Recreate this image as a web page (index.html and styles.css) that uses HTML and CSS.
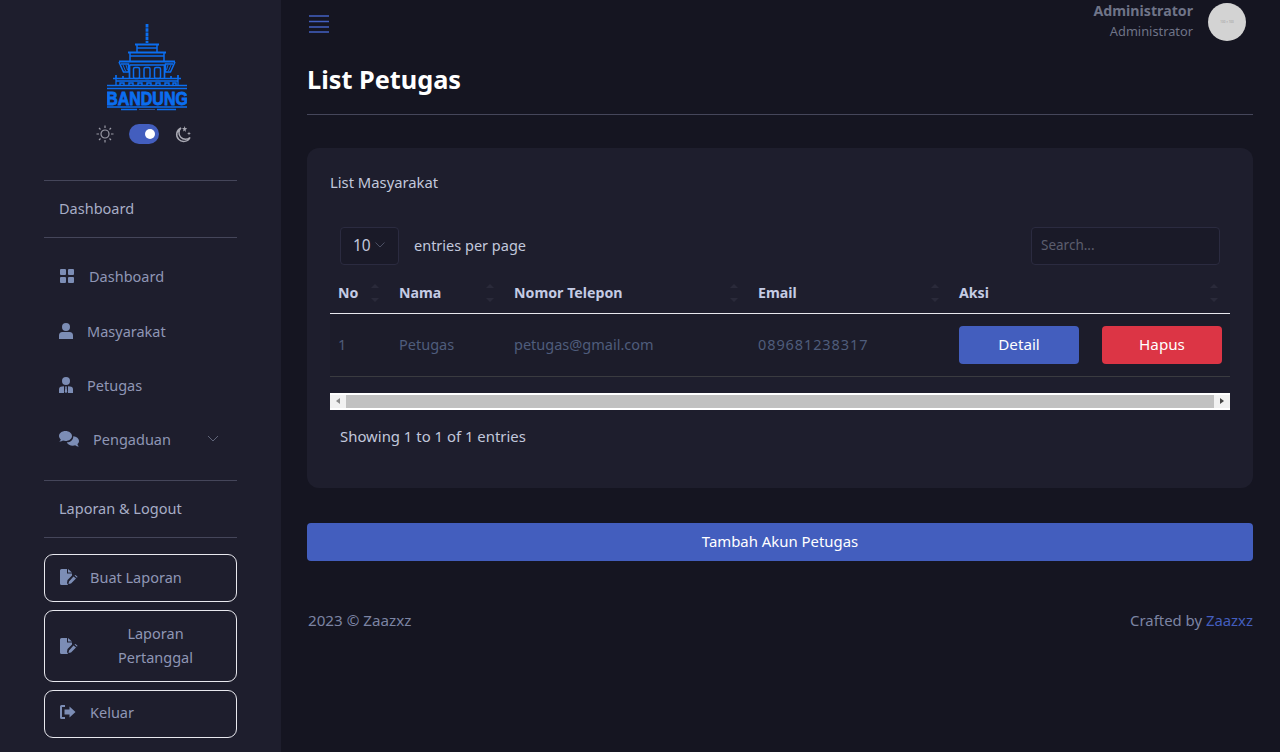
FILE: index.html
```html
<!DOCTYPE html>
<html lang="id">
<head>
<meta charset="utf-8">
<title>List Petugas</title>
<link rel="stylesheet" href="styles.css">
</head>
<body>
<div class="app">
  <aside class="sidebar">
    <div class="logo">
      <svg width="80" height="88" viewBox="0 0 80 88" fill="none" stroke="#0b6ef0" stroke-width="1.500">
        <path d="M40 0V19" stroke-width="2.800" stroke-dasharray="3.500 .7"/>
        <path d="M28 20.500H52" stroke-width="2"/>
        <path d="M30 21V28M50 21V28M30 24H50"/>
        <path d="M21 28.500H59" stroke-width="2"/>
        <path d="M23 29V37M57 29V37M23 32H57"/>
        <path d="M12 37.500H68" stroke-width="2"/>
        <path d="M12 38L16.500 48H21.500V40H14M68 38L63.500 48H58.500V40H66"/>
        <path d="M16 41L18.500 47M19 41L20.500 46M64 41L61.500 47M61 41L59.500 46" stroke-width=".9"/>
        <path d="M22.500 41H57.500V55M22.500 41V55" stroke-width="1.700"/>
        <rect x="26.500" y="43.500" width="6" height="11" rx="1.500"/>
        <rect x="37" y="43.500" width="6" height="11" rx="1.500"/>
        <rect x="47.500" y="43.500" width="6" height="11" rx="1.500"/>
        <path d="M6 54.500H74M9 51V54M71 51V54M16 52V54M64 52V54" stroke-width="1.700"/>
        <path d="M9 55V61M71 55V61M9 57H71" stroke-width="1.300"/>
        <path d="M13 61V59H17V61M22 61V59H26V61M31 61V59H35V61M40 61V59H44V61M49 61V59H53V61M58 61V59H62V61M66 61V59H69V61" stroke-width="1.400"/>
        <path d="M0 61.500H80M0 64.500H80" stroke-width="1.500"/>
        <path d="M0 83H80" stroke-width="1.600"/>
        <path d="M14 85.500H30M50 85.500H69" stroke-width="1.400"/>
        <path d="M32 85.500H48" stroke-width="1" stroke="#2c4f8e"/>
        <text x="40" y="81" class="logo-text" text-anchor="middle" transform="translate(0 -14) scale(1 1.172)">BANDUNG</text>
      </svg>
    </div>
    <div class="theme">
      <svg class="theme-icon" width="18" height="18" viewBox="0 0 18 18" fill="none" stroke="#9a9aa6" stroke-width="1.2">
        <circle cx="9" cy="9" r="4"/>
        <path d="M9 0.500V3M9 15V17.500M0.500 9H3M15 9H17.500M3 3L4.500 4.500M13.500 13.500L15 15M3 15L4.500 13.500M13.500 4.500L15 3"/>
      </svg>
      <span class="toggle"><span class="knob"></span></span>
      <svg class="theme-icon" width="18" height="18" viewBox="0 0 18 18" fill="none" stroke="#a9a9b3" stroke-width="1.5">
        <path d="M7 3A7 7 0 1 0 16 12.500A6.500 6.500 0 0 1 7 3Z"/>
        <path d="M10.500 1L11.300 3L13.300 3.500L11.500 4.800L12 7L10.500 5.500L9 6.500L9.600 4.600L8 3.300L10 3Z" fill="#a9a9b3" stroke="none"/>
        <path d="M15 6.500L15.500 8L17 8.500L15.500 9L15 10.500L14.500 9L13 8.500L14.500 8Z" fill="#a9a9b3" stroke="none"/>
      </svg>
    </div>

    <div class="side-heading first">Dashboard</div>
    <nav class="menu">
      <a class="menu-item gap-dash">
        <svg width="14" height="14" viewBox="0 0 14 14" fill="#7c8db5"><rect width="6" height="6" rx="1"/><rect x="8" width="6" height="6" rx="1"/><rect y="8" width="6" height="6" rx="1"/><rect x="8" y="8" width="6" height="6" rx="1"/></svg>
        <span>Dashboard</span>
      </a>
      <a class="menu-item">
        <svg width="14" height="16" viewBox="0 0 14 16" fill="#7c8db5"><circle cx="7" cy="4" r="4"/><path d="M3.500 9H10.500A3.500 3.500 0 0 1 14 12.500V16H0V12.500A3.500 3.500 0 0 1 3.500 9Z"/></svg>
        <span>Masyarakat</span>
      </a>
      <a class="menu-item">
        <svg width="14" height="16" viewBox="0 0 14 16" fill="#7c8db5"><circle cx="7" cy="4" r="4"/><path d="M3 9.500L5 9.200V16H0V12.500A3 3 0 0 1 3 9.500ZM11 9.500L9 9.200V16H14V12.500A3 3 0 0 0 11 9.500ZM6 9.500H8L7.700 11L8.300 15L7 16L5.700 15L6.300 11Z"/></svg>
        <span>Petugas</span>
      </a>
      <a class="menu-item chat">
        <svg width="20" height="16" viewBox="0 0 20 16" fill="#7c8db5"><path d="M6.500 0C10 0 13 2.200 13 5S10 10 6.500 10C5.500 10 4.700 9.800 3.900 9.500C3 10.200 1.800 10.700 .3 10.700C1.200 9.900 1.700 9 1.800 8.400C.7 7.500 0 6.300 0 5C0 2.200 2.900 0 6.500 0Z"/><path d="M14.300 5.200C17.500 5.500 20 7.500 20 10C20 11.200 19.400 12.300 18.400 13.100C18.500 13.900 19 14.800 19.800 15.600C18.400 15.500 17.100 15 16.200 14.300C15.500 14.600 14.700 14.700 13.800 14.700C11 14.700 8.600 13.300 7.800 11.300C11.300 11.200 14.400 9 14.300 5.200Z"/></svg>
        <span>Pengaduan</span>
        <svg class="chev" width="12" height="7" viewBox="0 0 12 7" fill="none" stroke="#5f6478" stroke-width="1"><path d="M1 1L6 6L11 1"/></svg>
      </a>
    </nav>
    <div class="side-heading second">Laporan &amp; Logout</div>
    <div class="side-buttons">
      <a class="side-btn">
        <svg width="18" height="16" viewBox="0 0 18 16" fill="#7c8db5"><path d="M0 1.500A1.500 1.500 0 0 1 1.500 0H7V4.500H12V6.500L7.500 11L7 14L8 16H1.500A1.500 1.500 0 0 1 0 14.500ZM8 0L12 3.500H8Z"/><path d="M13.500 7.500L16 9.500L11 14.500L8.500 15L9 12.500ZM14.500 6.500L15.500 6L17.500 7.800L17 8.800Z"/></svg>
        <span>Buat Laporan</span>
      </a>
      <a class="side-btn tall">
        <svg class="tall-icon" width="18" height="16" viewBox="0 0 18 16" fill="#7c8db5"><path d="M0 1.500A1.500 1.500 0 0 1 1.500 0H7V4.500H12V6.500L7.500 11L7 14L8 16H1.500A1.500 1.500 0 0 1 0 14.500ZM8 0L12 3.500H8Z"/><path d="M13.500 7.500L16 9.500L11 14.500L8.500 15L9 12.500ZM14.500 6.500L15.500 6L17.500 7.800L17 8.800Z"/></svg>
        <span class="btn-center">Laporan<br>Pertanggal</span>
      </a>
      <a class="side-btn last">
        <svg width="18" height="14" viewBox="0 0 18 14" fill="#7c8db5"><path d="M5 0V2H2V12H5V14H1.500A1.500 1.500 0 0 1 0 12.500V1.500A1.500 1.500 0 0 1 1.500 0Z"/><path d="M9.500 1.500L15.500 7L9.500 12.500V9.500H4.500V4.500H9.500Z"/></svg>
        <span>Keluar</span>
      </a>
    </div>
  </aside>

  <main class="main">
    <header class="topbar">
      <svg class="burger" width="20" height="18" viewBox="0 0 20 18" fill="none" stroke="#4360c2" stroke-width="1.500"><path d="M0 1H20M0 6.500H20M0 12H20M0 17H20"/></svg>
      <div class="user">
        <div class="user-text">
          <div class="user-name">Administrator</div>
          <div class="user-role">Administrator</div>
        </div>
        <div class="avatar"><span class="avatar-text">100 × 100</span></div>
      </div>
    </header>
    <h1 class="title">List Petugas</h1>
    <section class="card">
      <div class="card-title">List Masyarakat</div>
      <div class="dt-top">
        <div class="dt-length">
          <span class="select">10<svg width="10" height="6" viewBox="0 0 10 6" fill="none" stroke="#4b4f63"><path d="M.5 .5L5 5L9.500 .5"/></svg></span>
          <span class="entries">entries per page</span>
        </div>
        <div class="search">Search...</div>
      </div>
      <table class="table">
        <colgroup><col class="c1"><col class="c2"><col class="c3"><col class="c4"><col class="c5"></colgroup>
        <thead>
          <tr>
            <th>No<span class="sort"></span></th>
            <th>Nama<span class="sort"></span></th>
            <th>Nomor Telepon<span class="sort"></span></th>
            <th>Email<span class="sort"></span></th>
            <th>Aksi<span class="sort"></span></th>
          </tr>
        </thead>
        <tbody>
          <tr>
            <td>1</td>
            <td>Petugas</td>
            <td>petugas@gmail.com</td>
            <td class="num">089681238317</td>
            <td><div class="actions"><a class="btn primary small">Detail</a><a class="btn danger small">Hapus</a></div></td>
          </tr>
        </tbody>
      </table>
      <div class="scrollbar">
        <span class="sb-arrow"><span class="tri left"></span></span>
        <span class="sb-thumb"></span>
        <span class="sb-arrow"><span class="tri right"></span></span>
      </div>
      <div class="dt-info">Showing 1 to 1 of 1 entries</div>
    </section>
    <a class="btn primary wide">Tambah Akun Petugas</a>
    <footer class="footer">
      <span class="copy">2023 © Zaazxz</span>
      <span>Crafted by <a class="link">Zaazxz</a></span>
    </footer>
  </main>
</div>
</body>
</html>
```
FILE: styles.css
```css
* { box-sizing: border-box; }
html, body { margin: 0; height: 100%; }
body {
  background: #151521;
  color: #c2c8dc;
  font-family: "Noto Sans", "Open Sans", "Liberation Sans", sans-serif;
  font-size: 14.5px;
  overflow: hidden;
}
.app { display: flex; height: 752px; overflow: hidden; }

.sidebar {
  flex: 0 0 281px;
  background: #1e1e2d;
  padding: 24px 44px 0;
  overflow: hidden;
}
.logo { display: flex; justify-content: center; height: 88px; padding-left: 12px; }
.logo-text { font-family: "Liberation Sans", sans-serif; font-weight: 700; font-size: 16px; fill: #0b6ef0; stroke: #0b6ef0; stroke-width: .7; }
.theme { display: flex; align-items: center; justify-content: center; gap: 15px; margin-top: 12px; padding-left: 7px; height: 20px; }
.theme-icon { flex: none; }
.toggle { width: 30px; height: 20px; border-radius: 10px; background: #435ebe; display: flex; align-items: center; justify-content: flex-end; padding-right: 4px; }
.knob { width: 10px; height: 10px; border-radius: 50%; background: #fff; }

.side-heading {
  display: flex; align-items: center;
  height: 58px; padding: 0 0 2px 15px;
  border-top: 1px solid #45465a; border-bottom: 1px solid #45465a;
  color: #a7adc6;
}
.side-heading.first { margin-top: 36px; }
.side-heading.second { margin-top: 13px; }

.menu { display: flex; flex-direction: column; padding: 11px 0 0 15px; }
.menu-item { display: flex; align-items: center; gap: 14px; height: 54.500px; color: #8f96b5; }
.menu-item svg { flex: none; }
.menu-item.gap-dash { gap: 15px; padding-left: 1px; }
.menu-item.chat { padding-bottom: 1px; }
.menu-item.chat .chev { margin-left: 22px; margin-top: -1px; }

.side-buttons { display: flex; flex-direction: column; gap: 8px; margin-top: 16px; }
.side-btn {
  display: flex; align-items: center; gap: 12px;
  height: 48px; padding: 0 15px 2px;
  border: 1px solid #e8e8ee; border-radius: 9px;
  color: #8f96b5;
}
.side-btn svg { flex: none; }
.side-btn.tall { height: 71.500px; line-height: 24px; padding-bottom: 1px; }
.side-btn.last { height: 48.500px; padding-bottom: 3px; }
.tall-icon { margin-top: 1px; }
.btn-center { flex: 1; text-align: center; }

.main { flex: 1; min-width: 0; padding: 0 27px 0 26px; display: flex; flex-direction: column; }
.topbar { display: flex; justify-content: space-between; height: 50px; }
.burger { margin: 15px 0 0 2px; }
.user { display: flex; gap: 15px; margin-right: 7px; }
.user-text { text-align: right; padding-top: 1px; }
.user-name { font-weight: 700; color: #6f7488; font-size: 14.200px; line-height: 20px; }
.user-role { color: #6f7488; font-size: 12.800px; line-height: 20px; }
.avatar { width: 38px; height: 38px; border-radius: 50%; background: #d3d3d3; margin-top: 3px; display: flex; align-items: center; justify-content: center; }
.avatar-text { font-size: 3px; color: #999; }
.title { margin: 0; height: 65px; padding-top: 11px; font-size: 25.300px; line-height: 36px; font-weight: 700; color: #fff; border-bottom: 1px solid #45465a; }

.card { margin-top: 33px; height: 340px; background: #1e1e2d; border-radius: 12px; padding: 24px 23px 0; }
.card-title { line-height: 20px; font-size: 14.800px; }
.dt-top { display: flex; justify-content: space-between; align-items: center; margin-top: 35px; padding: 0 10px; height: 38px; }
.dt-length { display: flex; align-items: center; gap: 15px; }
.entries { margin-top: -2px; }
.select { display: flex; align-items: center; gap: 4px; width: 59px; height: 38px; padding: 0 0 2px 12px; background: #1a1a28; border: 1px solid #2b2b40; border-radius: 4px; font-size: 15.500px; }
.search { width: 189px; height: 38px; padding-left: 9px; line-height: 34px; background: #1a1a28; border: 1px solid #2b2b40; border-radius: 4px; color: #5c5e6e; font-size: 13.500px; }

.table { width: 900px; border-collapse: collapse; table-layout: fixed; margin-top: 6px; }
.c1 { width: 61px; } .c2 { width: 115px; } .c3 { width: 244px; } .c4 { width: 201px; } .c5 { width: 279px; }
.table th { position: relative; height: 42px; padding: 2px 0 0 8px; text-align: left; font-size: 14.200px; font-weight: 700; color: #c4cbe4; border-bottom: 1px solid #e8e8ee; }
.table td { height: 63px; padding: 0 0 2px 8px; color: #4f5d7c; border-bottom: 1px solid #3a3b40; background: #1c1c2a; }
.table td.num { letter-spacing: .9px; }
.table td:last-child { padding-bottom: 0; }
.sort { position: absolute; right: 12px; top: 11px; width: 8px; height: 22px; }
.sort::before, .sort::after { content: ""; position: absolute; left: 0; border: 4px solid transparent; }
.sort::before { top: -2px; border-bottom: 4px solid #2a2a3a; }
.sort::after { bottom: -2px; border-top: 4px solid #2a2a3a; }

.actions { display: flex; gap: 23px; }
.btn { display: flex; align-items: center; justify-content: center; border-radius: 4px; color: #fff; height: 38px; padding-bottom: 2px; font-size: 14.900px; }
.btn.small { width: 120px; font-size: 15.200px; }
.primary { background: #435ebe; }
.danger { background: #dc3545; }
.wide { margin-top: 35px; flex: none; }

.scrollbar { display: flex; align-items: center; width: 900px; height: 17px; margin-top: 16px; background: #fff; padding: 2px 0; }
.sb-arrow { flex: none; width: 16px; height: 13px; background: #f1f1f1; display: flex; align-items: center; justify-content: center; }
.sb-thumb { flex: 1; height: 13px; background: #c1c1c1; }
.tri { width: 0; height: 0; border: 3.500px solid transparent; }
.tri.left { border-right: 4px solid #8b8b8b; border-left: 0; }
.tri.right { border-left: 4px solid #444; border-right: 0; }
.dt-info { margin-top: 16px; padding-left: 10px; line-height: 20px; font-size: 14.900px; }

.footer { display: flex; justify-content: space-between; margin-top: 49px; line-height: 20px; color: #7c84a3; font-size: 14.900px; }
.copy { font-size: 15.200px; margin-left: 1px; }
.link { color: #435ebe; }
```
